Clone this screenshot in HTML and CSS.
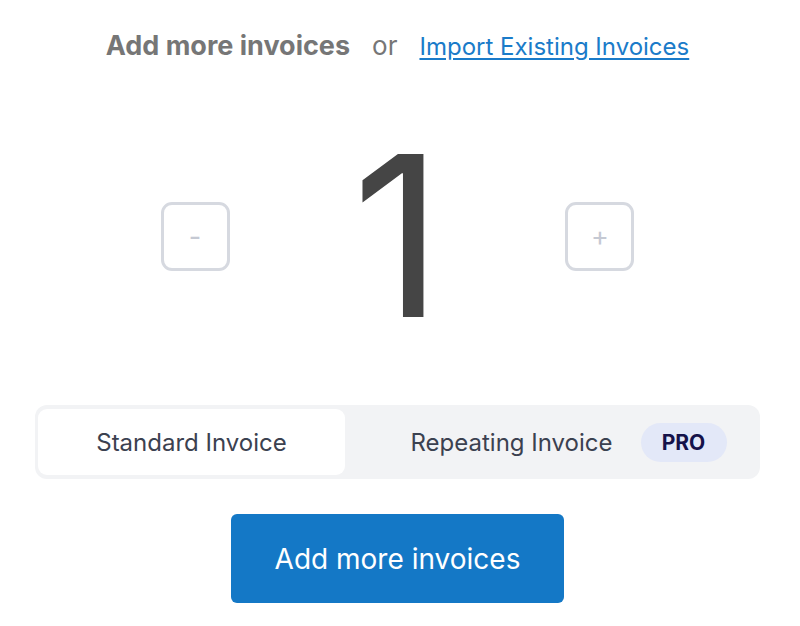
FILE: index.html
```html
<!DOCTYPE html>
<html lang="en">
<head>
  <meta charset="UTF-8" />
  <title>Add more invoices</title>
  <link rel="stylesheet" href="styles.css">
</head>
<body>
  <div class="panel">
    <div class="heading">
      <span class="title">Add more invoices</span>
      <span class="or">or</span>
      <a href="#" class="import">Import Existing Invoices</a>
    </div>

    <div class="counter">
      <button class="step">-</button>
      <div class="count">1</div>
      <button class="step">+</button>
    </div>

    <div class="tabs">
      <div class="tab active">Standard Invoice</div>
      <div class="tab repeat">
        <span>Repeating Invoice</span>
        <span class="pro">PRO</span>
      </div>
    </div>

    <button class="submit">Add more invoices</button>
  </div>
</body>
</html>
```

FILE: styles.css
```css
*, *::before, *::after { margin: 0; padding: 0; box-sizing: border-box; }

body {
  font-family: 'Inter', 'Noto Sans', sans-serif;
  background: #fff;
  color: #3b4150;
  overflow: hidden;
}

.panel {
  width: 800px;
  height: 626px;
  display: flex;
  flex-direction: column;
  align-items: center;
  padding: 29px 40px 0 35px;
}

.heading {
  display: flex;
  align-items: baseline;
  gap: 22px;
  height: 34px;
}

.title {
  font-size: 27px;
  font-weight: 700;
  color: #767676;
}

.or {
  font-size: 26px;
  color: #767676;
}

.import {
  font-size: 24px;
  color: #1a7bc9;
  text-decoration: underline;
  text-underline-offset: 3px;
}

.counter {
  display: flex;
  align-items: center;
  justify-content: space-between;
  width: 474px;
  height: 230px;
  margin-top: 58px;
}

.step {
  width: 69px;
  height: 69px;
  border: 3px solid #d6d9e0;
  border-radius: 11px;
  background: #fff;
  color: #c5c9d3;
  font-family: inherit;
  font-size: 27px;
  cursor: pointer;
}

.count {
  font-size: 224px;
  font-weight: 400;
  color: #454545;
  line-height: 1;
}

.tabs {
  display: flex;
  width: 100%;
  height: 74px;
  margin-top: 54px;
  padding: 4px 3px;
  background: #f2f3f5;
  border-radius: 12px;
}

.tab {
  display: flex;
  align-items: center;
  justify-content: center;
  font-size: 24px;
  color: #3b4150;
  border-radius: 9px;
}

.tab.active {
  width: 307px;
  background: #fff;
}

.tab.repeat {
  flex: 1;
  gap: 28px;
  padding-left: 35px;
}

.pro {
  display: inline-flex;
  align-items: center;
  justify-content: center;
  width: 86px;
  height: 39px;
  border-radius: 20px;
  background: #e3e8f8;
  color: #15124a;
  font-size: 21px;
  font-weight: 700;
}

.submit {
  width: 333px;
  height: 89px;
  margin-top: 35px;
  border: none;
  border-radius: 6px;
  background: #1478c6;
  color: #fff;
  font-family: inherit;
  font-size: 28px;
  cursor: pointer;
}
```
